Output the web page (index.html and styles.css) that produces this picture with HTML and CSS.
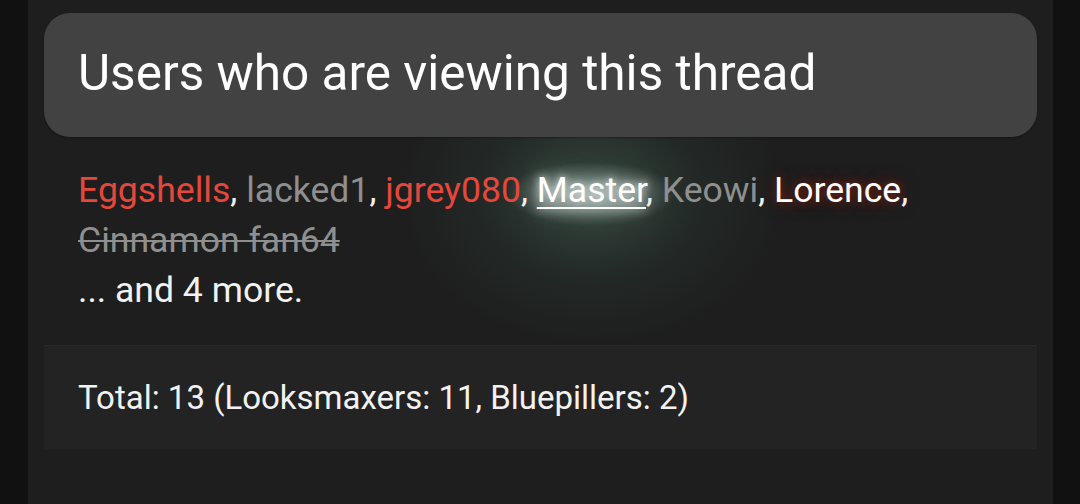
FILE: index.html
```html
<!DOCTYPE html>
<html lang="en">
<head>
    <meta charset="UTF-8">
    <title>Users who are viewing this thread</title>
    <link rel="stylesheet" href="styles.css">
</head>
<body>
    <div class="page">
        <div class="block">
            <div class="block-header">
                <h3>Users who are viewing this thread</h3>
            </div>

            <div class="block-body">
                <ul class="user-list">
                    <li><a class="user red">Eggshells</a>, </li>
                    <li><a class="user grey">lacked1</a>, </li>
                    <li><a class="user red">jgrey080</a>, </li>
                    <li><a class="user master">Master</a>, </li>
                    <li><a class="user grey">Keowi</a>, </li>
                    <li><a class="user lorence">Lorence</a>, </li>
                    <li><a class="user banned">Cinnamon fan64</a></li>
                </ul>
                <div class="more">... and 4 more.</div>
            </div>

            <div class="block-footer">
                Total: 13 (Looksmaxers: 11, Bluepillers: 2)
            </div>
        </div>
    </div>
</body>
</html>
```

FILE: styles.css
```css
html, body {
    margin: 0;
    padding: 0;
    height: 100%;
}
body {
    background-color: #111111;
    font-family: Roboto, 'Liberation Sans', sans-serif;
    color: #f2f2f2;
    overflow: hidden;
}
.page {
    position: relative;
    z-index: 0;
    margin: 0 27px 0 28px;
    height: 100%;
    background-color: #1e1e1e;
    padding: 13px 16px 0 16px;
    box-sizing: border-box;
}
.block-header {
    background-color: #424242;
    border-radius: 26px;
    height: 124px;
    box-shadow: 0 1px 2px rgba(0,0,0,0.3);
    padding: 0 34px;
    display: flex;
    align-items: center;
    box-sizing: border-box;
}
.block-header h3 {
    margin: 0 0 4px 0;
    font-size: 49.5px;
    font-weight: 400;
    color: #ffffff;
}
.block-body {
    padding: 28px 34px 30px 34px;
    font-size: 35.6px;
    line-height: 50px;
}
.user-list {
    list-style: none;
    margin: 0;
    padding: 0;
    display: flex;
    flex-wrap: wrap;
}
.user-list li {
    white-space: pre;
}
.user {
    cursor: pointer;
}
.red {
    color: #e5473b;
}
.grey {
    color: #8f8f8f;
}
.master {
    position: relative;
    color: #ffffff;
    text-decoration: underline;
    text-decoration-thickness: 2px;
    text-underline-offset: 5px;
    text-shadow: 0 0 8px rgba(255,255,255,0.85), 0 0 18px rgba(215,235,230,0.6), 0 0 32px rgba(160,195,185,0.45);
}
/* green halo round the highlighted name */
.master::before {
    content: "";
    position: absolute;
    z-index: -1;
    left: 50%;
    top: 60%;
    width: 380px;
    height: 300px;
    transform: translate(-50%, -50%);
    background:
        radial-gradient(ellipse 85px 32px at 50% 50%, rgba(225,240,235,0.45), rgba(200,225,215,0) 100%),
        radial-gradient(closest-side, rgba(110,170,145,0.3), rgba(70,120,100,0.12) 55%, rgba(60,100,85,0) 100%);
    pointer-events: none;
}
.lorence {
    color: #ffffff;
    text-shadow: 0 0 10px rgba(150,35,20,0.8), 0 0 18px rgba(110,25,15,0.6);
}
.banned {
    color: #8f8f8f;
    text-decoration: line-through;
    text-decoration-thickness: 2px;
}
.more {
    color: #f2f2f2;
}
.block-footer {
    background-color: #232323;
    border-top: 1px solid #2a2a2a;
    height: 104px;
    box-sizing: border-box;
    padding: 0 34px;
    display: flex;
    align-items: center;
    font-size: 33px;
    color: #f2f2f2;
}
```
